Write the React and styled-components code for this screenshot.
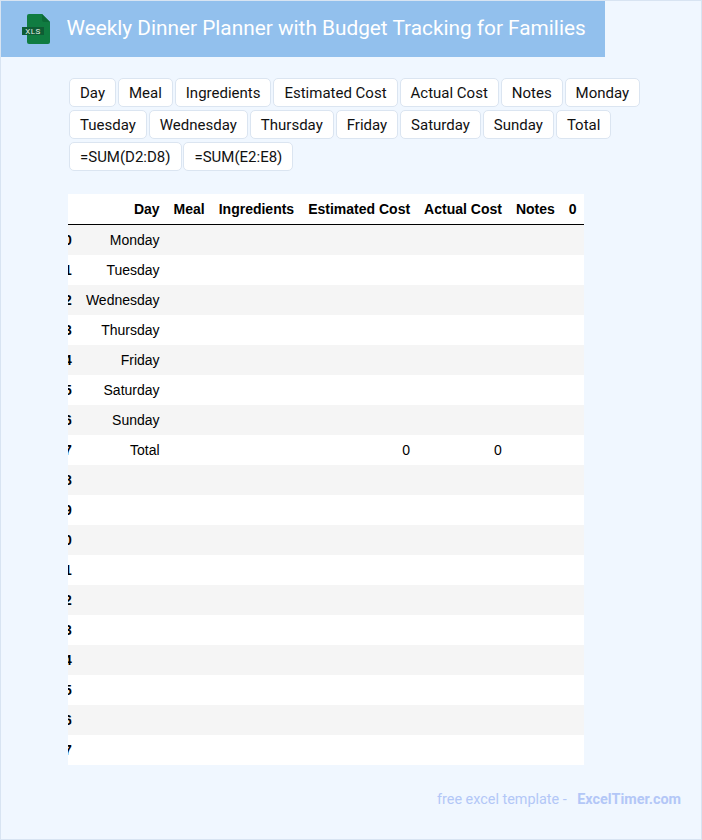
import React from "react";
import styled, { createGlobalStyle } from "styled-components";

const GlobalStyle = createGlobalStyle`
  html, body {
    margin: 0;
    padding: 0;
  }
  * {
    box-sizing: border-box;
  }
`;

const Page = styled.div`
  display: flex;
  flex-direction: column;
  height: 840px;
  background-color: #f0f7ff;
  border: 1px solid #d8e4f2;
  font-family: Roboto, "Liberation Sans", sans-serif;
`;

const Header = styled.header`
  display: flex;
  align-items: center;
  gap: 15.5px;
  width: 604px;
  height: 56px;
  padding-left: 20px;
  background-color: #92c0ed;
`;

const Title = styled.h1`
  margin: 0 0 2px;
  font-size: 20.8px;
  font-weight: 400;
  color: #ffffff;
  white-space: nowrap;
`;

const ChipList = styled.div`
  display: flex;
  flex-wrap: wrap;
  gap: 3px 1.96px;
  width: 590px;
  margin: 21px 0 0 68px;
`;

const Chip = styled.span`
  height: 29px;
  padding: 0 10px;
  line-height: 28px;
  font-size: 15px;
  color: #111111;
  background-color: #ffffff;
  border: 1px solid #dbe5f1;
  border-radius: 5px;
`;

const TableClip = styled.div`
  width: 516px;
  margin: 23px 0 0 67px;
  overflow: hidden;
`;

const Table = styled.table`
  margin-left: -18.7px;
  border-collapse: separate;
  border-spacing: 0;
  background-color: #ffffff;
  font-family: "Liberation Sans", Arial, sans-serif;
  font-size: 14px;
  color: #000000;

  th, td {
    height: 30px;
    padding: 0 7px;
    text-align: right;
    white-space: nowrap;
  }

  thead th {
    height: 31px;
    padding-bottom: 1px;
    border-bottom: 1px solid #000000;
  }

  tbody tr:nth-child(odd) {
    background-color: #f5f5f5;
  }
`;

const Footer = styled.footer`
  display: flex;
  justify-content: flex-end;
  gap: 10.5px;
  margin: 26px 20px 0 0;
  font-size: 14.4px;
  color: #b3c7f7;
`;

const FooterLink = styled.span`
  font-weight: 700;
`;

const IconSvg = styled.svg`
  flex: none;
`;

const columns = ["Day", "Meal", "Ingredients", "Estimated Cost", "Actual Cost", "Notes", "0"];

const days = ["Monday", "Tuesday", "Wednesday", "Thursday", "Friday", "Saturday", "Sunday", "Total"];

const chips = [
  "Day", "Meal", "Ingredients", "Estimated Cost", "Actual Cost", "Notes", "Monday",
  "Tuesday", "Wednesday", "Thursday", "Friday", "Saturday", "Sunday", "Total",
  "=SUM(D2:D8)", "=SUM(E2:E8)",
];

const rows = Array.from({ length: 18 }, (_, i) => i);

const XlsIcon = () => (
  <IconSvg width="30" height="32" viewBox="0 0 30 32">
    <path d="M8 1h13l8 8v20a2 2 0 0 1-2 2H8a2 2 0 0 1-2-2V3a2 2 0 0 1 2-2z" fill="#107c41" />
    <path d="M21 1l8 8h-6a2 2 0 0 1-2-2z" fill="#0c6a37" />
    <rect x="1" y="14" width="22" height="8" fill="#0e5c34" />
    <text x="12" y="21" textAnchor="middle" fontFamily="Roboto, sans-serif" fontSize="8" letterSpacing="0.4" fill="#e4efe8">XLS</text>
  </IconSvg>
);

export default function App() {
  return (
    <>
      <GlobalStyle />
      <Page>
        <Header>
          <XlsIcon />
          <Title>Weekly Dinner Planner with Budget Tracking for Families</Title>
        </Header>
        <ChipList>
          {chips.map((chip) => (
            <Chip key={chip}>{chip}</Chip>
          ))}
        </ChipList>
        <TableClip>
          <Table>
            <thead>
              <tr>
                <th />
                {columns.map((col) => (
                  <th key={col}>{col}</th>
                ))}
              </tr>
            </thead>
            <tbody>
              {rows.map((i) => (
                <tr key={i}>
                  <th>{i}</th>
                  <td>{days[i]}</td>
                  <td />
                  <td />
                  <td>{i === 7 ? 0 : null}</td>
                  <td>{i === 7 ? 0 : null}</td>
                  <td />
                  <td />
                </tr>
              ))}
            </tbody>
          </Table>
        </TableClip>
        <Footer>
          <span>free excel template -</span>
          <FooterLink>ExcelTimer.com</FooterLink>
        </Footer>
      </Page>
    </>
  );
}
